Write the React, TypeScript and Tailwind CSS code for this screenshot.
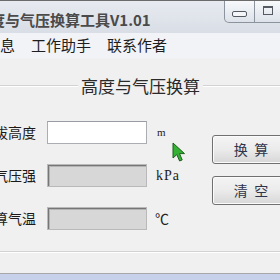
import React from 'react';

const fields = [
  { label: '海拔高度', unit: 'm', enabled: true },
  { label: '大气压强', unit: 'kPa', enabled: false },
  { label: '估算气温', unit: '℃', enabled: false },
];

const EtchedLine: React.FC<{ className?: string }> = ({ className = '' }) => (
  <div className={`h-[2px] border-y border-t-[#d3d3d3] border-b-white ${className}`}></div>
);

const App: React.FC = () => {
  return (
    <div className="relative w-[280px] h-[280px] overflow-hidden flex flex-col bg-[#c8d1ea] font-['Noto_Sans_CJK_SC',sans-serif]">
      {/* Title bar */}
      <div className="h-[33px] shrink-0 flex items-start border-t border-[#6b6b6b] bg-linear-to-b from-[#e7eaf0] to-[#d9dee6]">
        <span className="ml-[-25px] mt-[10px] text-[15px] leading-[18px] font-bold text-[#4a4a4a] whitespace-nowrap">
          高度与气压换算工具V1.01
        </span>
        <div className="flex-1"></div>
        <div className="flex shrink-0">
          <div className="w-[31px] h-[22px] border border-t-0 border-[#8c939d] rounded-bl-[5px] bg-linear-to-b from-[#f7f9fb] to-[#dde2ea] flex justify-center">
            <div className="mt-[10px] w-[15px] h-[6px] border border-[#555a62] rounded-[2px] bg-[#f4f6f8]"></div>
          </div>
          <div className="w-[25px] h-[22px] border-b border-[#8c939d] bg-linear-to-b from-[#f7f9fb] to-[#dde2ea]">
            <div className="ml-[8px] mt-[5px] w-[10px] h-[9px] border border-t-2 border-[#555a62]"></div>
          </div>
        </div>
      </div>

      {/* Menu bar */}
      <div className="h-[25px] shrink-0 flex items-center gap-[16px] bg-[#f2f3f6] text-[15px] text-[#1e1e1e] whitespace-nowrap">
        <span className="ml-[-15px]">信息</span>
        <span>工作助手</span>
        <span>联系作者</span>
      </div>

      {/* Body */}
      <div className="h-[216px] shrink-0 flex flex-col pt-[18px] bg-[#f0f0f0] border-b border-[#a8a8a8]">
        <div className="h-[20px] flex items-center">
          <EtchedLine className="w-[78px] shrink-0" />
          <span className="mx-[3px] text-[17px] leading-[20px] text-[#2a2a2a] whitespace-nowrap">高度与气压换算</span>
          <EtchedLine className="flex-1" />
        </div>

        <div className="mt-[25px] flex">
          <div className="w-[212px] shrink-0 flex flex-col gap-[20px]">
            {fields.map((f) => (
              <div key={f.label} className="h-[23px] flex items-center">
                <div className="w-[36px] shrink-0 flex justify-end">
                  <span className="shrink-0 text-[14px] text-[#1a1a1a] whitespace-nowrap">{f.label}</span>
                </div>
                {f.enabled ? (
                  <div className="ml-[11px] w-[100px] h-[23px] bg-white border border-[#abadb3] border-t-[#9a9ca3]"></div>
                ) : (
                  <div className="ml-[11px] w-[100px] h-[23px] bg-[#d7d7d7] border border-[#b9b9b9] shadow-[inset_1px_1px_0_#767676,inset_2px_2px_0_#b4b4b4]"></div>
                )}
                {f.unit === 'm' && (
                  <span className="ml-[10px] text-[11px] text-[#222] font-['Liberation_Serif',serif]">m</span>
                )}
                {f.unit === 'kPa' && (
                  <span className="ml-[9px] text-[14px] tracking-[1px] text-[#222] font-['Liberation_Serif',serif]">kPa</span>
                )}
                {f.unit === '℃' && <span className="ml-[8px] text-[14px] text-[#222]">℃</span>}
              </div>
            ))}
          </div>

          <div className="mt-[14px] flex flex-col gap-[12px]">
            <button className="w-[78px] h-[29px] shrink-0 rounded-[3px] border border-[#707070] bg-linear-to-b from-[#f4f4f4] via-[#ebebeb] to-[#d7d7d7] shadow-[inset_0_0_0_1px_#fbfbfb] text-[14px] text-[#30344a] whitespace-pre">
              换  算
            </button>
            <button className="w-[78px] h-[29px] shrink-0 rounded-[3px] border border-[#707070] bg-linear-to-b from-[#f4f4f4] via-[#ebebeb] to-[#d7d7d7] shadow-[inset_0_0_0_1px_#fbfbfb] text-[14px] text-[#30344a] whitespace-pre">
              清  空
            </button>
          </div>
        </div>

        <EtchedLine className="mt-[21px]" />
      </div>

      {/* Mouse pointer */}
      <svg className="absolute left-[172px] top-[142px]" width="14" height="21" viewBox="0 0 14 21">
        <path d="M1,1 L1,16 L4.8,12.6 L7.6,19 L10.2,17.9 L7.5,11.6 L12.5,11.6 Z" fill="#33b133" stroke="#1b5e1b" strokeWidth="1" strokeLinejoin="round" />
      </svg>
    </div>
  );
};

export default App;
